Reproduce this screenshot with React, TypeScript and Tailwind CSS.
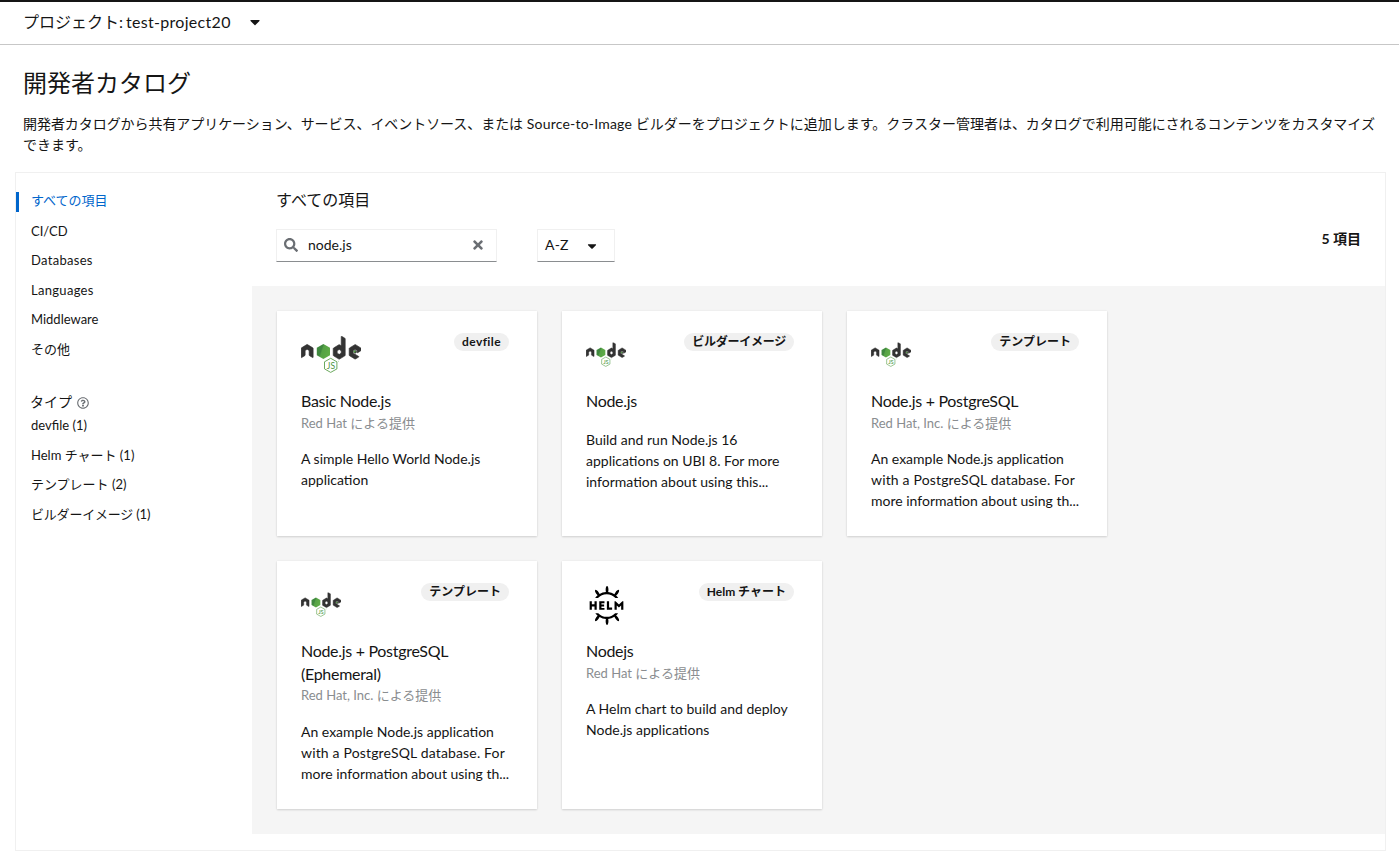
import React from "react";
import clsx from "clsx";
import { DiNodejs } from "react-icons/di";
import { SiHelm } from "react-icons/si";
import { FaSearch, FaTimes, FaCaretDown, FaRegQuestionCircle } from "react-icons/fa";

type Item = {
  logo: "node" | "node-small" | "helm";
  badge: string;
  title: string[];
  provider?: string;
  description: string[];
};

const categories = ["CI/CD", "Databases", "Languages", "Middleware", "その他"];
const types = ["devfile (1)", "Helm チャート (1)", "テンプレート (2)", "ビルダーイメージ (1)"];

const postgresDescription = [
  "An example Node.js application",
  "with a PostgreSQL database. For",
  "more information about using th...",
];

const items: Item[] = [
  {
    logo: "node",
    badge: "devfile",
    title: ["Basic Node.js"],
    provider: "Red Hat による提供",
    description: ["A simple Hello World Node.js", "application"],
  },
  {
    logo: "node-small",
    badge: "ビルダーイメージ",
    title: ["Node.js"],
    description: ["Build and run Node.js 16", "applications on UBI 8. For more", "information about using this..."],
  },
  {
    logo: "node-small",
    badge: "テンプレート",
    title: ["Node.js + PostgreSQL"],
    provider: "Red Hat, Inc. による提供",
    description: postgresDescription,
  },
  {
    logo: "node-small",
    badge: "テンプレート",
    title: ["Node.js + PostgreSQL", "(Ephemeral)"],
    provider: "Red Hat, Inc. による提供",
    description: postgresDescription,
  },
  {
    logo: "helm",
    badge: "Helm チャート",
    title: ["Nodejs"],
    provider: "Red Hat による提供",
    description: ["A Helm chart to build and deploy", "Node.js applications"],
  },
];

function NodeLogo({ className, id }: { className: string; id: string }) {
  return (
    <svg viewBox="0 0 60 37" className={className}>
      <defs>
        <clipPath id={`${id}-word`}>
          <rect x="0" y="0" width="14.5" height="26" />
          <rect x="30.5" y="0" width="30" height="26" />
        </clipPath>
        <linearGradient id={`${id}-green`} x1="0" y1="0.2" x2="1" y2="0.6">
          <stop offset="0" stopColor="#3f8b3d" />
          <stop offset="0.35" stopColor="#3f873f" />
          <stop offset="0.45" stopColor="#55a245" />
          <stop offset="1" stopColor="#5fad47" />
        </linearGradient>
      </defs>
      <g clipPath={`url(#${id}-word)`}>
        <g transform="translate(-0.8 -30.6) scale(2.44 2.6)">
          <DiNodejs size={32} color="#333" stroke="#333" strokeWidth="0.25" />
        </g>
      </g>
      <path d="M22.4 8 L29 11.8 V19.2 L22.4 23 L15.8 19.2 V11.8 Z" fill={`url(#${id}-green)`} />
      <circle cx="53.6" cy="15.6" r="1.1" fill="#55a245" />
      <path
        d="M29.7 22.3 L35.9 25.8 V32.9 L29.7 36.4 L23.5 32.9 V25.8 Z"
        fill="none"
        stroke="#5a9f4c"
        strokeWidth="0.9"
      />
      <text x="29.9" y="32.5" textAnchor="middle" fontFamily="Lato, sans-serif" fontSize="8.6" fill="#4b9440">
        JS
      </text>
      <circle cx="37.6" cy="25.2" r="0.4" fill="#5a9f4c" />
    </svg>
  );
}

function Logo({ kind, id }: { kind: Item["logo"]; id: string }) {
  if (kind === "node") return <NodeLogo id={id} className="mt-px h-[37px] w-[60px]" />;
  if (kind === "helm") return <SiHelm size={39} className="ml-[0.6px] mt-[0.5px] text-black" />;
  return <NodeLogo id={id} className="mt-[7px] h-[25px] w-10" />;
}

function Badge({ text }: { text: string }) {
  return (
    <span
      className={clsx(
        "flex h-[18px] items-center whitespace-nowrap rounded-full bg-[#f0f0f0] px-2 text-[12px] font-bold",
        text === "devfile" && "tracking-[0.4px]",
        text === "ビルダーイメージ" && "tracking-[-0.25px]",
      )}
    >
      {text}
    </span>
  );
}

function Card({ item, id }: { item: Item; id: string }) {
  return (
    <article className="bg-white px-6 pb-6 pt-[22px] shadow-[0_1px_2px_rgba(3,3,3,0.14),0_0_2px_rgba(3,3,3,0.06)]">
      <header className="-mr-px flex h-[55.5px] items-start justify-between pr-[5px]">
        <div className="pt-0.5">
          <Logo kind={item.logo} id={id} />
        </div>
        <Badge text={item.badge} />
      </header>
      <h3 className="text-[16px] leading-[23px] tracking-[-0.3px]">
        {item.title.map((line) => (
          <span key={line} className="block whitespace-nowrap">{line}</span>
        ))}
      </h3>
      {item.provider && (
        <div
          className={clsx(
            "whitespace-nowrap text-[13px] leading-5 text-[#8a8d90]",
            item.title.length > 1 ? "mt-[0.5px] h-[18.5px]" : "mt-[1.5px] h-[17.5px]",
          )}
        >
          {item.provider}
        </div>
      )}
      <p className="mt-[17.5px] text-[14px] leading-[21px]">
        {item.description.map((line) => (
          <span key={line} className={clsx("block whitespace-nowrap", line.includes("SQL") && "tracking-[0.16px]")}>
            {line}
          </span>
        ))}
      </p>
    </article>
  );
}

export default function App() {
  return (
    <div className="h-[866px] w-[1399px] overflow-hidden border-t-2 border-[#151515] bg-white font-['Lato','Noto_Sans_CJK_JP',sans-serif] text-[#151515]">
      <div className="flex h-[43px] items-center border-b border-[#c7c7c7] px-[23px] pb-0.5">
        <button className="flex items-center text-[16px] leading-6">
          <span>プロジェクト:</span>
          <span className="ml-[3px] tracking-[0.3px]">test-project20</span>
          <FaCaretDown size={16} className="ml-4" />
        </button>
      </div>

      <header className="px-[23px] pt-[21px]">
        <h1 className="text-[24px] leading-[34px]">開発者カタログ</h1>
        <p className="mt-[13px] whitespace-nowrap text-[14px] leading-[21px]">
          <span className="tracking-[-0.06px]">開発者カタログから共有アプリケーション、サービス、イベントソース、または</span>
          <span className="tracking-[0.2px]"> Source-to-Image </span>
          <span className="tracking-[-0.01px]">ビルダーをプロジェクトに追加します。クラスター管理者は、カタログで利用可能にされるコンテンツをカスタマイズ</span>
          <br />
          できます。
        </p>
      </header>

      <main className="ml-[15px] mt-[17px] flex h-[679px] w-[1371px] border border-[#f0f0f0]">
        <nav className="w-[236px] shrink-0 pt-[19px] text-[13px]">
          <a className="block h-5 border-l-[3px] border-[#06c] pl-3 leading-[17px] text-[#06c]">すべての項目</a>
          <ul className="mt-[8.5px] pl-[15px]">
            {categories.map((c) => (
              <li
                key={c}
                className={clsx("h-[29.5px] leading-5", (c === "Databases" || c === "Languages") && "tracking-[0.3px]")}
              >
                {c}
              </li>
            ))}
          </ul>
          <div className="mt-[21px] flex h-6 items-center gap-1 pl-[14px] text-[14px]">
            タイプ
            <FaRegQuestionCircle size={12} className="ml-px mt-[3px] text-[#6a6e73]" />
          </div>
          <ul className="mt-0.5 pl-[15px]">
            {types.map((t) => (
              <li key={t} className={clsx("h-[29.5px] leading-5", t.startsWith("ビ") && "tracking-[-0.2px]")}>{t}</li>
            ))}
          </ul>
        </nav>

        <section className="flex-1">
          <div className="flex h-[113px] justify-between pl-6 pr-6 pt-[15px]">
            <div>
              <h2 className="text-[16px] leading-6">すべての項目</h2>
              <div className="mt-[17px] flex gap-10">
                <div className="flex h-[33px] w-[221px] items-center border border-[#f0f0f0] border-b-[#8a8d90] px-[7px] pb-0.5 text-[14px]">
                  <FaSearch size={14} className="text-[#6a6e73]" />
                  <span className="ml-2.5 flex-1">node.js</span>
                  <FaTimes size={14} className="mr-1 text-[#6a6e73]" />
                </div>
                <button className="flex h-[33px] w-[78px] items-center border border-[#f0f0f0] border-b-[#8a8d90] pl-[7px] text-[14px]">
                  <span className="pb-0.5 tracking-[0.2px]">A-Z</span>
                  <FaCaretDown size={14} className="ml-4" />
                </button>
              </div>
            </div>
            <div className="pt-10 text-[14px] font-bold leading-[21px]">5 項目</div>
          </div>
          <div className="grid h-[548px] grid-cols-[260px_260px_260px] grid-rows-[225px_248px] gap-[25px] bg-[#f5f5f5] pl-[25px] pt-[25px]">
            {items.map((item, i) => (
              <Card key={i} item={item} id={`logo-${i}`} />
            ))}
          </div>
        </section>
      </main>
    </div>
  );
}
